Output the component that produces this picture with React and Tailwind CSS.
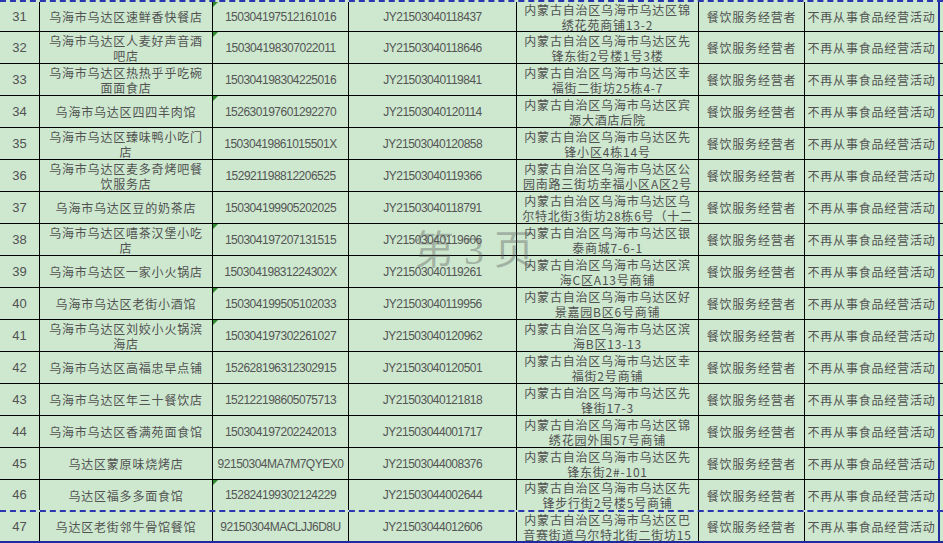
const rows = [
  ['31', ['乌海市乌达区速鲜香快餐店'], '150304197512161016', 'JY21503040118437', ['内蒙古自治区乌海市乌达区锦', '绣花苑商铺13-2'], true],
  ['32', ['乌海市乌达区人麦好声音酒', '吧店'], '150304198307022011', 'JY21503040118646', ['内蒙古自治区乌海市乌达区先', '锋东街2号楼1号3楼'], true],
  ['33', ['乌海市乌达区热热乎乎吃碗', '面面食店'], '150304198304225016', 'JY21503040119841', ['内蒙古自治区乌海市乌达区幸', '福街二街坊25栋4-7'], false],
  ['34', ['乌海市乌达区四四羊肉馆'], '152630197601292270', 'JY21503040120114', ['内蒙古自治区乌海市乌达区宾', '源大酒店后院'], true],
  ['35', ['乌海市乌达区臻味鸭小吃门', '店'], '15030419861015501X', 'JY21503040120858', ['内蒙古自治区乌海市乌达区先', '锋小区4栋14号'], false],
  ['36', ['乌海市乌达区麦多奇烤吧餐', '饮服务店'], '152921198812206525', 'JY21503040119366', ['内蒙古自治区乌海市乌达区公', '园南路三街坊幸福小区A区2号'], false],
  ['37', ['乌海市乌达区豆的奶茶店'], '150304199905202025', 'JY21503040118791', ['内蒙古自治区乌海市乌达区乌', '尔特北街3街坊28栋6号（十二'], false],
  ['38', ['乌海市乌达区嘻茶汉堡小吃', '店'], '150304197207131515', 'JY21503040119606', ['内蒙古自治区乌海市乌达区银', '泰商城7-6-1'], true],
  ['39', ['乌海市乌达区一家小火锅店'], '15030419831224302X', 'JY21503040119261', ['内蒙古自治区乌海市乌达区滨', '海C区A13号商铺'], false],
  ['40', ['乌海市乌达区老街小酒馆'], '150304199505102033', 'JY21503040119956', ['内蒙古自治区乌海市乌达区好', '景嘉园B区6号商铺'], true],
  ['41', ['乌海市乌达区刘姣小火锅滨', '海店'], '150304197302261027', 'JY21503040120962', ['内蒙古自治区乌海市乌达区滨', '海B区13-13'], true],
  ['42', ['乌海市乌达区高福忠早点铺'], '152628196312302915', 'JY21503040120501', ['内蒙古自治区乌海市乌达区幸', '福街2号商铺'], false],
  ['43', ['乌海市乌达区年三十餐饮店'], '152122198605075713', 'JY21503040121818', ['内蒙古自治区乌海市乌达区先', '锋街17-3'], false],
  ['44', ['乌海市乌达区香满苑面食馆'], '150304197202242013', 'JY21503044001717', ['内蒙古自治区乌海市乌达区锦', '绣花园外围57号商铺'], false],
  ['45', ['乌达区蒙原味烧烤店'], '92150304MA7M7QYEX0', 'JY21503044008376', ['内蒙古自治区乌海市乌达区先', '锋东街2#-101'], false],
  ['46', ['乌达区福多多面食馆'], '152824199302124229', 'JY21503044002644', ['内蒙古自治区乌海市乌达区先', '锋步行街2号楼5号商铺'], true],
  ['47', ['乌达区老街邻牛骨馆餐馆'], '92150304MACLJJ6D8U', 'JY21503044012606', ['内蒙古自治区乌海市乌达区巴', '音赛街道乌尔特北街二街坊15'], false],
]

const cjk = "font-['Noto_Sans_CJK_SC',sans-serif] text-[12px] tracking-[0.8px] leading-[15px] text-[#525252]"
const num = "font-['Liberation_Sans',Arial,sans-serif] text-[12px] tracking-[-0.5px] text-[#555555]"

function Lines({ lines }) {
  return (
    <div className={cjk}>
      {lines.map((l, i) => (
        <div key={i} className="whitespace-nowrap">{l}</div>
      ))}
    </div>
  )
}

export default function App() {
  return (
    <div className="relative w-[943px] h-[543px] overflow-hidden bg-[#cde8cf]">
      <div className="border-t-2 border-dashed border-[#2a35b0]">
        {rows.map((r, i) => {
          let rowCls = 'h-[32px] border-b border-black'
          if (i === 0) rowCls = 'h-[30px] border-b border-black'
          if (i === rows.length - 2) rowCls = 'h-[32px] border-b-2 border-dashed border-[#2a35b0]'
          if (i === rows.length - 1) rowCls = 'h-[31px] border-b-2 border-[#1f2a9c]'
          return (
            <div key={r[0]} className={`grid grid-cols-[40px_173px_136px_168px_182px_106px_135px] ${rowCls}`}>
              <div className="flex items-center justify-center border-r border-black font-['Liberation_Sans',Arial,sans-serif] text-[13px] text-[#525252]">
                {r[0]}
              </div>
              <div className="flex items-center justify-center text-center border-r border-black overflow-hidden">
                <Lines lines={r[1]} />
              </div>
              <div className="relative flex items-center justify-center border-r border-black overflow-hidden">
                {r[5] && (
                  <span className="absolute top-0 left-0 w-0 h-0 border-t-[5px] border-t-[#2b8a2b] border-r-[5px] border-r-transparent" />
                )}
                <span className={num}>{r[2]}</span>
              </div>
              <div className="flex items-center justify-center border-r border-black">
                <span className={num}>{r[3]}</span>
              </div>
              <div className="flex items-center justify-center text-center border-r border-black overflow-hidden">
                <Lines lines={r[4]} />
              </div>
              <div className="flex items-center justify-center border-r border-black">
                <span className={cjk}>餐饮服务经营者</span>
              </div>
              <div className="flex items-center justify-center border-r-2 border-[#1f2a9c]">
                <span className={cjk}>不再从事食品经营活动</span>
              </div>
            </div>
          )
        })}
      </div>
      <div className="absolute left-[414px] top-[226px] font-['Liberation_Serif','Noto_Sans_CJK_SC',serif] text-[40px] leading-[50px] text-[#5a5a5a]/40 whitespace-pre">
        第 3 页
      </div>
    </div>
  )
}
